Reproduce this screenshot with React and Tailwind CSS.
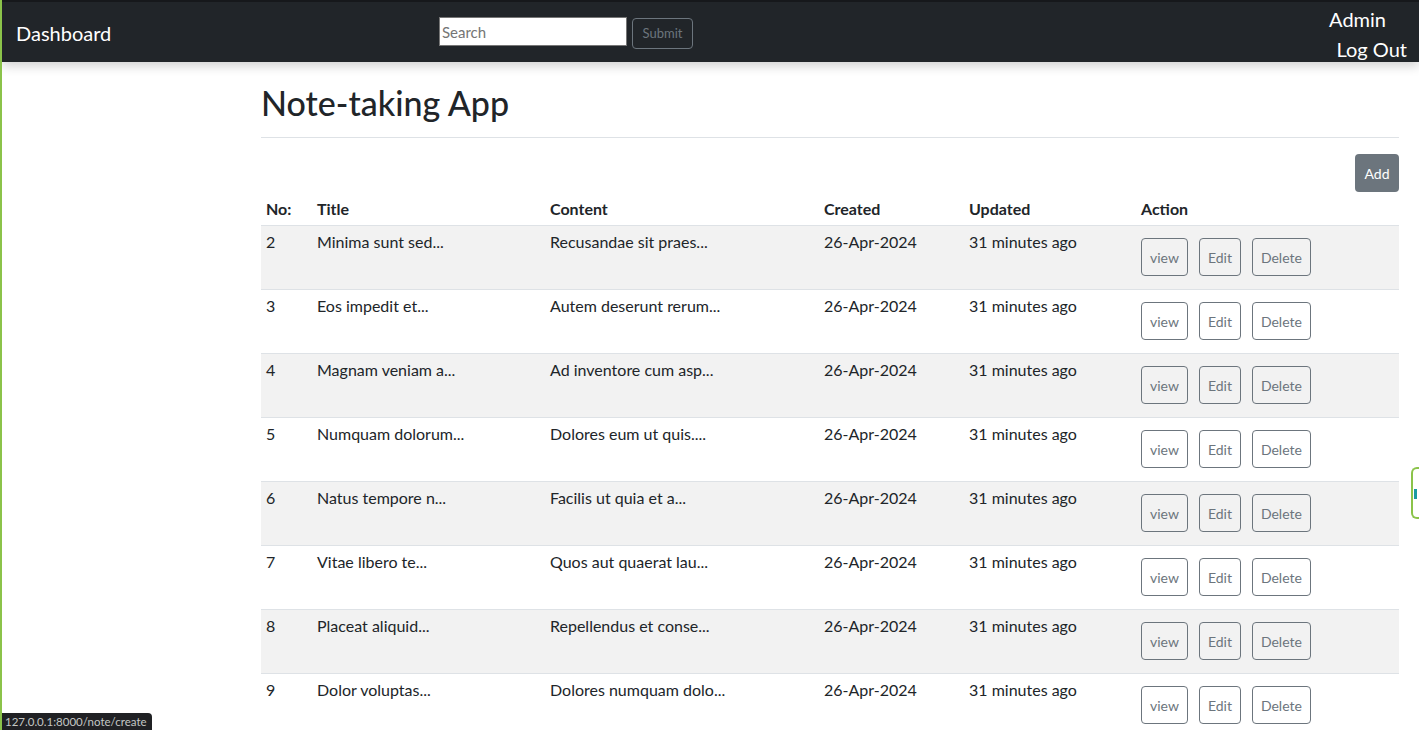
import React from 'react';

const notes = [
  { id: 2, title: 'Minima sunt sed...', content: 'Recusandae sit praes...' },
  { id: 3, title: 'Eos impedit et...', content: 'Autem deserunt rerum...' },
  { id: 4, title: 'Magnam veniam a...', content: 'Ad inventore cum asp...' },
  { id: 5, title: 'Numquam dolorum...', content: 'Dolores eum ut quis....' },
  { id: 6, title: 'Natus tempore n...', content: 'Facilis ut quia et a...' },
  { id: 7, title: 'Vitae libero te...', content: 'Quos aut quaerat lau...' },
  { id: 8, title: 'Placeat aliquid...', content: 'Repellendus et conse...' },
  { id: 9, title: 'Dolor voluptas...', content: 'Dolores numquam dolo...' },
];

const font = { fontFamily: 'Lato, "Noto Sans", Arial, sans-serif' };

const ActionButton = ({ label }) => (
  <button className="h-[38px] px-2 border border-[#6c757d] rounded text-[14px] text-[#6c757d] bg-transparent">
    {label}
  </button>
);

const Navbar = () => (
  <nav className="relative z-10 h-[62px] bg-[#212529] border-t-2 border-[#16181b] shadow-[0_4px_10px_rgba(0,0,0,0.18)] flex items-start">
    <div className="w-[437px] pl-[14px] pt-[17px] text-[20px] leading-[28px] text-white">
      Dashboard
    </div>
    <form className="flex items-start pt-[15px]" onSubmit={(e) => e.preventDefault()}>
      <input
        type="text"
        placeholder="Search"
        className="w-[188px] h-[29px] bg-white border border-[#767676] px-[2px] text-[15px] text-black placeholder:text-[#757575] outline-none"
      />
      <button className="ml-[5px] mt-px h-[31px] w-[61px] border border-[#6c757d] rounded text-[13px] text-[#6c757d]">
        Submit
      </button>
    </form>
    <div className="ml-auto pr-[12px] pt-[2px] flex flex-col items-end text-[20px] leading-[30px] text-white">
      <span className="mr-[21px]">Admin</span>
      <span>Log Out</span>
    </div>
  </nav>
);

export default function App() {
  return (
    <div
      className="relative h-[730px] overflow-hidden bg-white border-l-2 border-[#8bc34a] text-[#212529]"
      style={font}
    >
      <Navbar />

      <main className="ml-[259px] w-[1138px]">
        <h1 className="mt-[22px] text-[34px] leading-[38px] font-medium">Note-taking App</h1>
        <hr className="mt-[15px] border-t border-[#dee2e6]" />

        <div className="flex justify-end mt-[16px]">
          <button className="h-[38px] w-[44px] rounded bg-[#6c757d] text-white text-[14px]">Add</button>
        </div>

        <table className="w-full mt-px border-collapse text-[16px] text-left">
          <thead>
            <tr className="border-b border-[#dee2e6]">
              <th className="w-[51px] px-[5px] py-1 font-bold leading-6">No:</th>
              <th className="w-[233px] px-[5px] py-1 font-bold leading-6">Title</th>
              <th className="w-[274px] px-[5px] py-1 font-bold leading-6">Content</th>
              <th className="w-[145px] px-[5px] py-1 font-bold leading-6">Created</th>
              <th className="w-[172px] px-[5px] py-1 font-bold leading-6">Updated</th>
              <th className="px-[5px] py-1 font-bold leading-6">Action</th>
            </tr>
          </thead>
          <tbody>
            {notes.map((note, i) => (
              <tr
                key={note.id}
                className={`border-b border-[#dee2e6] ${i % 2 === 0 ? 'bg-[#f2f2f2]' : 'bg-white'}`}
              >
                <td className="h-[64px] px-[5px] pt-1 align-top leading-6">{note.id}</td>
                <td className="px-[5px] pt-1 align-top leading-6">{note.title}</td>
                <td className="px-[5px] pt-1 align-top leading-6">{note.content}</td>
                <td className="px-[5px] pt-1 align-top leading-6">26-Apr-2024</td>
                <td className="px-[5px] pt-1 align-top leading-6">31 minutes ago</td>
                <td className="px-[5px] pt-3 align-top">
                  <div className="flex gap-[11px]">
                    <ActionButton label="view" />
                    <ActionButton label="Edit" />
                    <ActionButton label="Delete" />
                  </div>
                </td>
              </tr>
            ))}
          </tbody>
        </table>
      </main>

      <div className="absolute right-0 top-[467px] w-[8px] h-[52px] rounded-l-[6px] border-2 border-r-0 border-[#8bc34a] bg-white">
        <div className="mt-[20px] ml-[1px] w-[3px] h-[10px] bg-[#1a9ba1]" />
      </div>

      <div className="absolute left-0 bottom-0 h-[17px] pl-[3px] pr-[5px] bg-[#202124] rounded-tr-[4px] text-[11.5px] leading-[17px] text-[#c4c7c5]">
        127.0.0.1:8000/note/create
      </div>
    </div>
  );
}
